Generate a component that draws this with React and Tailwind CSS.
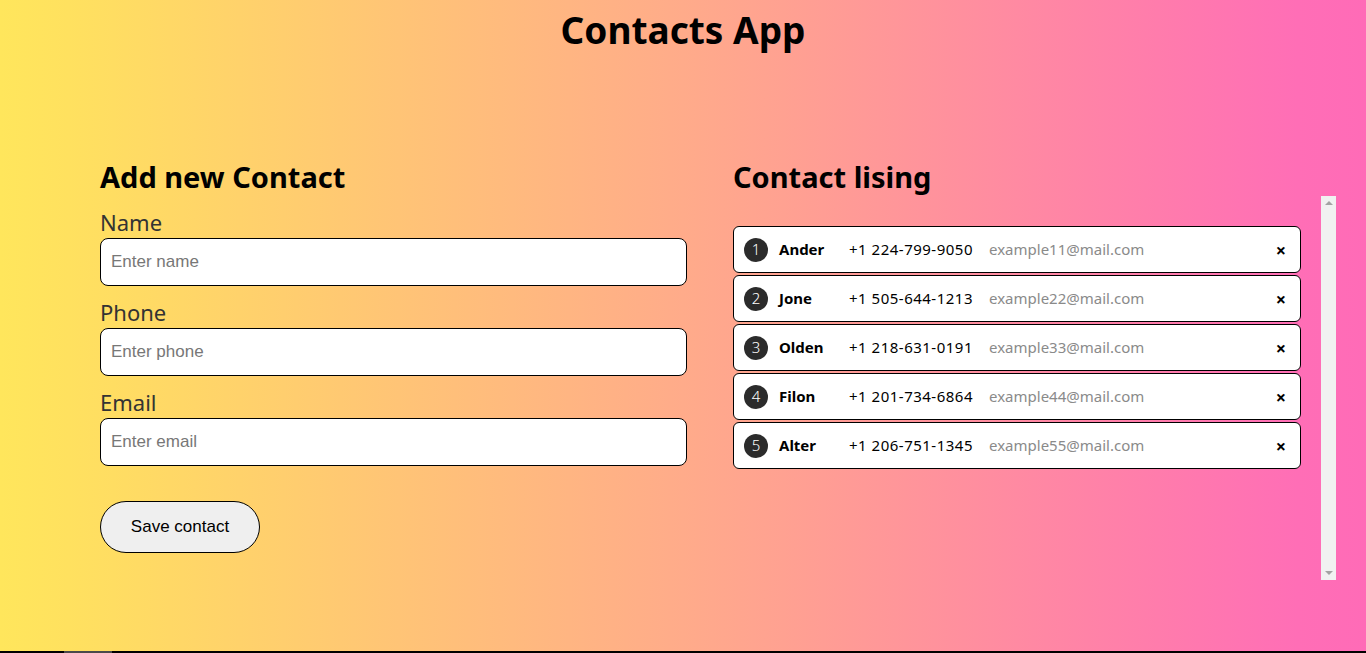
import React, { useState } from 'react';

const initialContacts = [
  { id: 1, name: 'Ander', phone: '+1 224-799-9050', email: 'example11@mail.com' },
  { id: 2, name: 'Jone', phone: '+1 505-644-1213', email: 'example22@mail.com' },
  { id: 3, name: 'Olden', phone: '+1 218-631-0191', email: 'example33@mail.com' },
  { id: 4, name: 'Filon', phone: '+1 201-734-6864', email: 'example44@mail.com' },
  { id: 5, name: 'Alter', phone: '+1 206-751-1345', email: 'example55@mail.com' },
];

function Field({ label, placeholder, value, onChange }) {
  return (
    <label className="block mb-[14px]">
      <span className="block text-[22px] leading-[24px] mb-[4px] text-[#333]">{label}</span>
      <input
        type="text"
        value={value}
        onChange={onChange}
        placeholder={placeholder}
        className="block w-full h-[48px] bg-white border border-black rounded-[8px] px-[10px] text-[17px] font-['Liberation_Sans',Arial,sans-serif] placeholder:text-[#777] outline-none"
      />
    </label>
  );
}

function ContactItem({ index, contact, onRemove }) {
  return (
    <li className="flex items-center h-[47px] mb-[2px] bg-white border border-black rounded-[6px] pl-[10px] pr-[14px] text-[15px]">
      <span className="w-[24px] h-[24px] rounded-full bg-[#2b2b2b] text-white flex items-center justify-center text-[15px] font-light">
        {index}
      </span>
      <span className="w-[70px] ml-[11px] font-bold">{contact.name}</span>
      <span className="w-[140px] tracking-[0.5px]">{contact.phone}</span>
      <span className="flex-1 text-[#8a8a8a]">{contact.email}</span>
      <button
        type="button"
        onClick={() => onRemove(contact.id)}
        className="text-[18px] font-bold leading-none"
        aria-label="Delete contact"
      >
        ×
      </button>
    </li>
  );
}

function ScrollTrack() {
  return (
    <div className="w-[15px] h-[384px] bg-[#f1f1f1] flex flex-col items-center justify-between py-[5px]">
      <span className="w-0 h-0 border-l-[4px] border-r-[4px] border-b-[4px] border-l-transparent border-r-transparent border-b-[#a3a3a3]" />
      <span className="w-0 h-0 border-l-[4px] border-r-[4px] border-t-[4px] border-l-transparent border-r-transparent border-t-[#a3a3a3]" />
    </div>
  );
}

export default function App() {
  const [contacts, setContacts] = useState(initialContacts);
  const [name, setName] = useState('');
  const [phone, setPhone] = useState('');
  const [email, setEmail] = useState('');

  const saveContact = () => {
    if (!name) return;
    setContacts((prev) => [...prev, { id: Date.now(), name, phone, email }]);
    setName('');
    setPhone('');
    setEmail('');
  };

  const removeContact = (id) => {
    setContacts((prev) => prev.filter((c) => c.id !== id));
  };

  return (
    <div className="font-['Noto_Sans',sans-serif] text-black">
      <main className="h-[651px] bg-[linear-gradient(90deg,#ffe65c_0%,#ffe15f_5%,#ffab8a_50%,#ff6eb6_95%,#ff6bb7_100%)]">
        <h1 className="text-center text-[37px] font-bold leading-[60px]">Contacts App</h1>

        <div className="flex pl-[100px] pt-[98px]">
          <section className="w-[587px]">
            <h2 className="text-[29px] font-bold leading-[37px] mb-[15px]">Add new Contact</h2>
            <Field label="Name" placeholder="Enter name" value={name} onChange={(e) => setName(e.target.value)} />
            <Field label="Phone" placeholder="Enter phone" value={phone} onChange={(e) => setPhone(e.target.value)} />
            <Field label="Email" placeholder="Enter email" value={email} onChange={(e) => setEmail(e.target.value)} />
            <button
              type="button"
              onClick={saveContact}
              className="mt-[21px] w-[160px] h-[52px] rounded-full border border-black bg-[#efefef] text-[17px] font-['Liberation_Sans',Arial,sans-serif]"
            >
              Save contact
            </button>
          </section>

          <section className="w-[603px] ml-[46px]">
            <h2 className="text-[29px] font-bold leading-[37px] mb-[1px]">Contact lising</h2>
            <div className="flex gap-[20px]">
              <ul className="w-[568px] h-[384px] overflow-hidden pt-[30px]">
                {contacts.map((c, i) => (
                  <ContactItem key={c.id} index={i + 1} contact={c} onRemove={removeContact} />
                ))}
              </ul>
              <ScrollTrack />
            </div>
          </section>
        </div>
      </main>
      <div className="h-[2px] bg-black">
        <div className="ml-[64px] w-[48px] h-[2px] bg-[#4a4a4a]" />
      </div>
    </div>
  );
}
